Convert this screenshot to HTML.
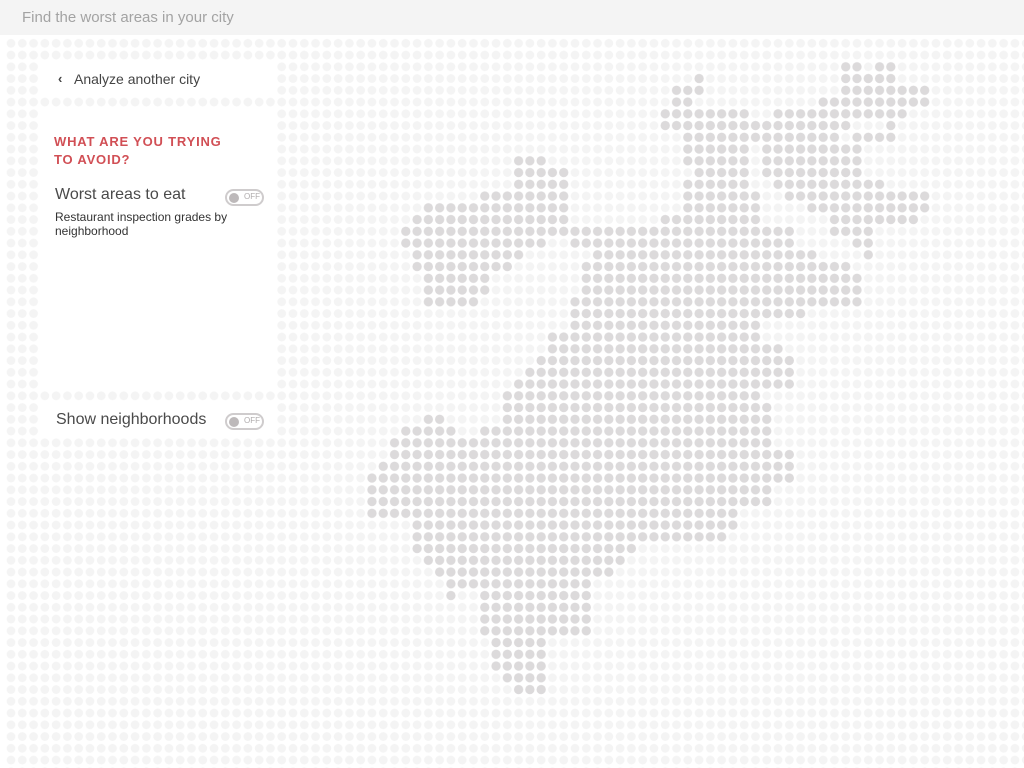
<!DOCTYPE html>
<html><head><meta charset="utf-8"><style>
html,body{margin:0;padding:0;background:#fff;width:1024px;height:768px;overflow:hidden;font-family:"Liberation Sans",sans-serif}
#bg{position:absolute;left:0;top:0}
#hdr{position:absolute;left:0;top:0;width:1024px;height:35px;background:#f4f4f4}
#hdr span{position:absolute;left:22px;top:9px;font-size:15px;color:#a3a3a3}
.t{position:absolute;white-space:nowrap}
.tog{position:absolute;width:35px;height:13px;border:2px solid #cfcccd;border-radius:9px;background:#fff}
.tog i{position:absolute;left:2px;top:1.5px;width:10px;height:10px;border-radius:50%;background:#bdb9ba}
.tog b{position:absolute;left:17px;top:1px;font-size:8px;font-weight:normal;color:#b0acad}
</style></head><body>
<svg id="bg" width="1024" height="768" xmlns="http://www.w3.org/2000/svg">
<defs>
<pattern id="lt" patternUnits="userSpaceOnUse" x="0" y="0" width="1" height="1"><ellipse cx="0.5" cy="0.5" rx="0.39" ry="0.375" fill="#f4f4f4"/></pattern>
<pattern id="dk" patternUnits="userSpaceOnUse" x="0" y="0" width="1" height="1"><ellipse cx="0.5" cy="0.5" rx="0.41" ry="0.395" fill="#dcdadb"/></pattern>
</defs>
<g transform="translate(5.36,37.425) scale(11.28,11.75)">
<rect x="0" y="0" width="91" height="63" fill="url(#lt)"/>
<rect x="3" y="2" width="21" height="3" fill="#fff"/>
<rect x="3" y="6" width="21" height="24" fill="#fff"/>
<rect x="3" y="31" width="21" height="3" fill="#fff"/>
<g fill="url(#dk)">
<rect x="74" y="2" width="2" height="1"/><rect x="77" y="2" width="2" height="1"/>
<rect x="61" y="3" width="1" height="1"/><rect x="74" y="3" width="5" height="1"/>
<rect x="59" y="4" width="3" height="1"/><rect x="74" y="4" width="8" height="1"/>
<rect x="59" y="5" width="2" height="1"/><rect x="72" y="5" width="10" height="1"/>
<rect x="58" y="6" width="8" height="1"/><rect x="68" y="6" width="12" height="1"/>
<rect x="58" y="7" width="17" height="1"/><rect x="78" y="7" width="1" height="1"/>
<rect x="60" y="8" width="14" height="1"/><rect x="75" y="8" width="4" height="1"/>
<rect x="60" y="9" width="6" height="1"/><rect x="67" y="9" width="9" height="1"/>
<rect x="45" y="10" width="3" height="1"/><rect x="60" y="10" width="6" height="1"/><rect x="67" y="10" width="9" height="1"/>
<rect x="45" y="11" width="5" height="1"/><rect x="61" y="11" width="5" height="1"/><rect x="67" y="11" width="9" height="1"/>
<rect x="45" y="12" width="5" height="1"/><rect x="60" y="12" width="6" height="1"/><rect x="68" y="12" width="10" height="1"/>
<rect x="42" y="13" width="8" height="1"/><rect x="60" y="13" width="7" height="1"/><rect x="69" y="13" width="13" height="1"/>
<rect x="37" y="14" width="13" height="1"/><rect x="60" y="14" width="7" height="1"/><rect x="71" y="14" width="11" height="1"/>
<rect x="36" y="15" width="14" height="1"/><rect x="58" y="15" width="9" height="1"/><rect x="73" y="15" width="8" height="1"/>
<rect x="35" y="16" width="35" height="1"/><rect x="73" y="16" width="4" height="1"/>
<rect x="35" y="17" width="13" height="1"/><rect x="50" y="17" width="20" height="1"/><rect x="75" y="17" width="2" height="1"/>
<rect x="36" y="18" width="10" height="1"/><rect x="52" y="18" width="20" height="1"/><rect x="76" y="18" width="1" height="1"/>
<rect x="36" y="19" width="9" height="1"/><rect x="51" y="19" width="24" height="1"/>
<rect x="37" y="20" width="6" height="1"/><rect x="51" y="20" width="25" height="1"/>
<rect x="37" y="21" width="6" height="1"/><rect x="51" y="21" width="25" height="1"/>
<rect x="37" y="22" width="5" height="1"/><rect x="50" y="22" width="26" height="1"/>
<rect x="50" y="23" width="21" height="1"/>
<rect x="50" y="24" width="17" height="1"/>
<rect x="48" y="25" width="19" height="1"/>
<rect x="48" y="26" width="21" height="1"/>
<rect x="47" y="27" width="23" height="1"/>
<rect x="46" y="28" width="24" height="1"/>
<rect x="45" y="29" width="25" height="1"/>
<rect x="44" y="30" width="23" height="1"/>
<rect x="44" y="31" width="24" height="1"/>
<rect x="37" y="32" width="2" height="1"/><rect x="44" y="32" width="24" height="1"/>
<rect x="35" y="33" width="5" height="1"/><rect x="42" y="33" width="26" height="1"/>
<rect x="34" y="34" width="34" height="1"/>
<rect x="34" y="35" width="36" height="1"/>
<rect x="33" y="36" width="37" height="1"/>
<rect x="32" y="37" width="38" height="1"/>
<rect x="32" y="38" width="36" height="1"/>
<rect x="32" y="39" width="36" height="1"/>
<rect x="32" y="40" width="33" height="1"/>
<rect x="36" y="41" width="29" height="1"/>
<rect x="36" y="42" width="28" height="1"/>
<rect x="36" y="43" width="20" height="1"/>
<rect x="37" y="44" width="18" height="1"/>
<rect x="38" y="45" width="16" height="1"/>
<rect x="39" y="46" width="13" height="1"/>
<rect x="39" y="47" width="1" height="1"/><rect x="42" y="47" width="10" height="1"/>
<rect x="42" y="48" width="10" height="3"/>
<rect x="43" y="51" width="5" height="3"/>
<rect x="44" y="54" width="4" height="1"/>
<rect x="45" y="55" width="3" height="1"/>
</g>
</g>
</svg>
<div id="hdr"><span>Find the worst areas in your city</span></div>
<div class="t" style="left:58px;top:71px;font-size:13px;color:#444;font-weight:bold">&#8249;</div>
<div class="t" style="left:74px;top:71px;font-size:14px;color:#444">Analyze another city</div>
<div class="t" style="left:54px;top:133px;font-size:13px;line-height:18px;color:#d14f55;font-weight:bold;letter-spacing:0.8px">WHAT ARE YOU TRYING<br>TO AVOID?</div>
<div class="t" style="left:55px;top:186px;font-size:16px;color:#4a4a4a">Worst areas to eat</div>
<div class="t" style="left:55px;top:210px;font-size:12px;line-height:14px;color:#333">Restaurant inspection grades by<br>neighborhood</div>
<div class="tog" style="left:225px;top:189px"><i></i><b>OFF</b></div>
<div class="t" style="left:56px;top:411px;font-size:16px;color:#4a4a4a">Show neighborhoods</div>
<div class="tog" style="left:225px;top:413px"><i></i><b>OFF</b></div>
</body></html>
